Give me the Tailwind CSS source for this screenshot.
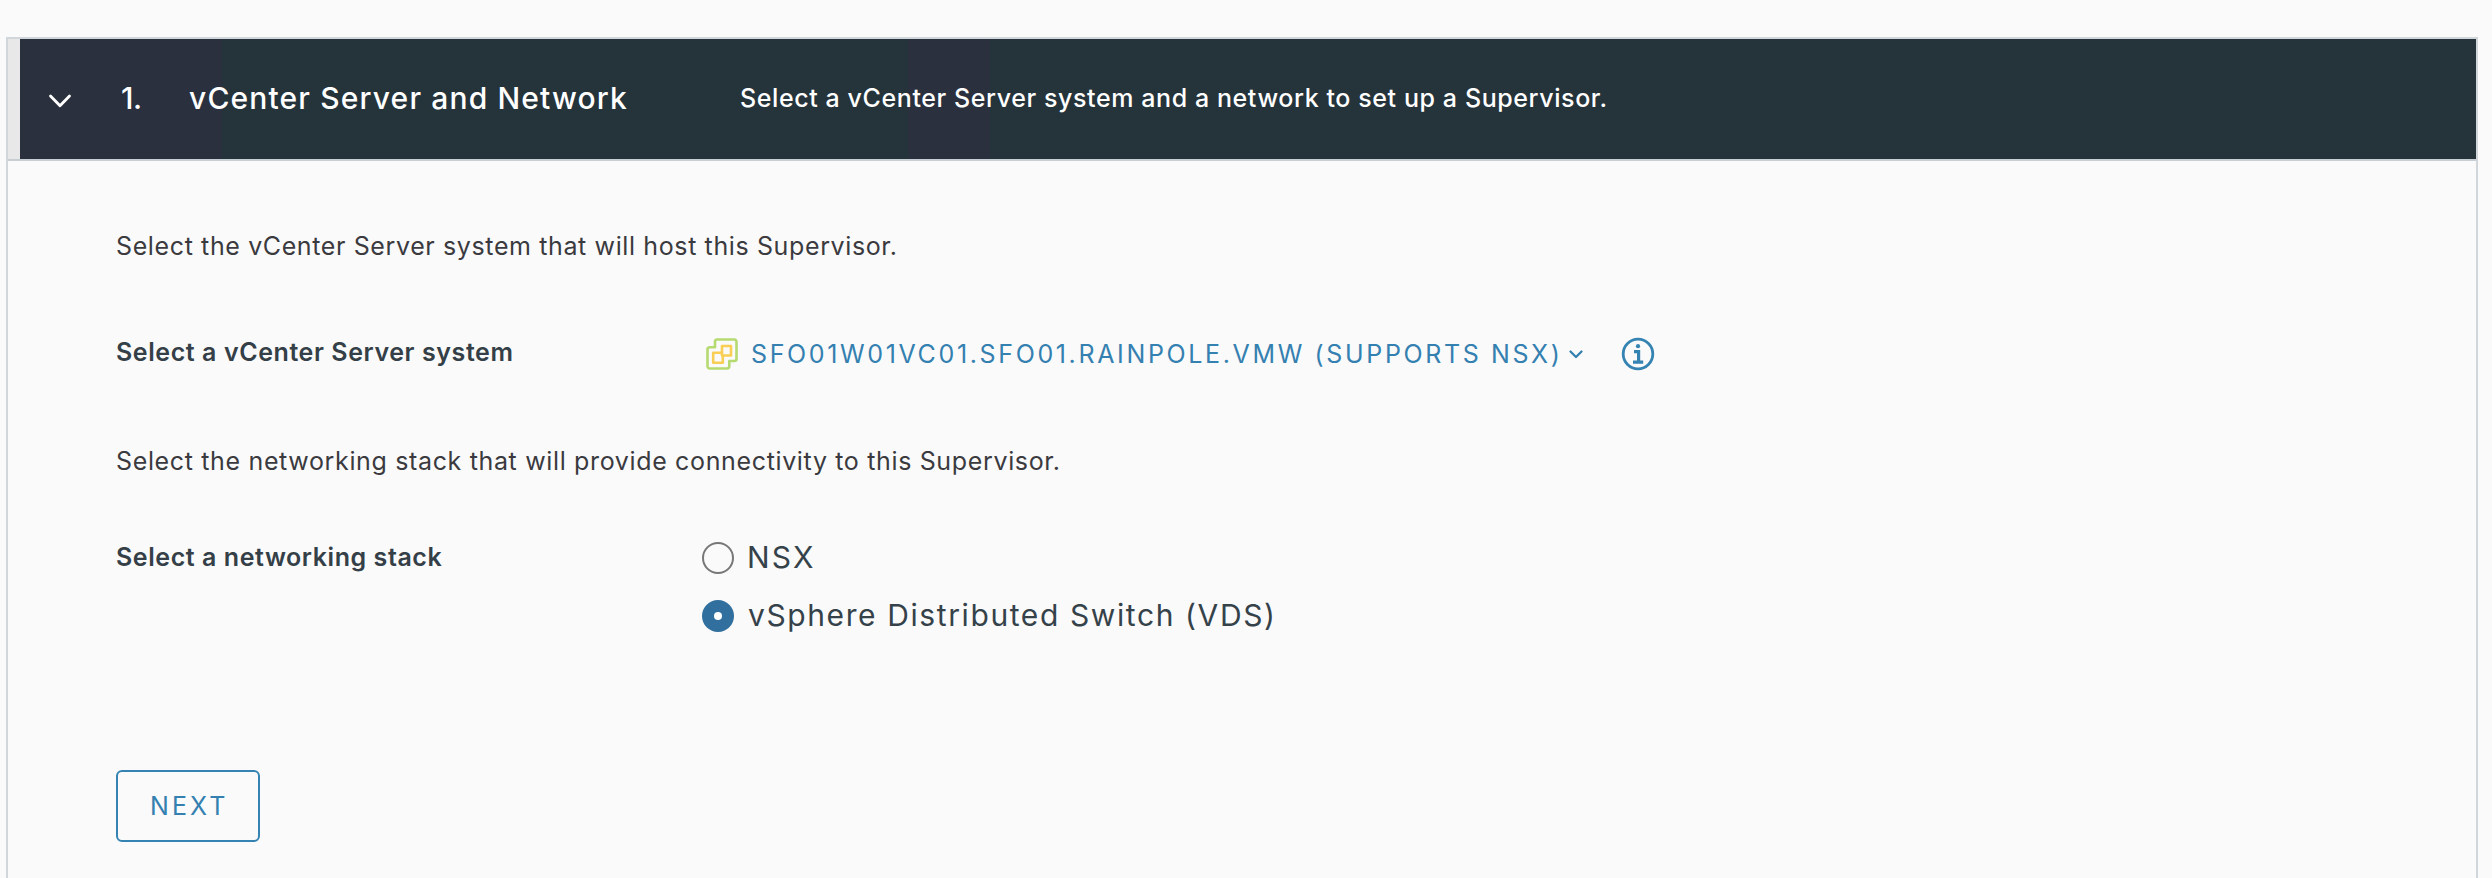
<!DOCTYPE html>
<html lang="en">
<head>
<meta charset="utf-8">
<title>vCenter Server and Network</title>
<script src="https://cdn.jsdelivr.net/npm/@tailwindcss/browser@4"></script>
</head>
<body class="h-[878px] overflow-hidden bg-[#fafafa] pt-[37px] pl-[6px] font-['Inter','Liberation_Sans',sans-serif] text-[25px] leading-[32px] text-[#3a3a3f]">
<main class="h-[841px] w-[2472px] border-2 border-b-0 border-[#d0d6da]">
  <header class="flex h-[122px] border-b-2 border-[#c8cfd4] bg-[#e8e8e8] pl-[12px]">
    <div class="flex flex-1 items-center bg-[#25333b] bg-[linear-gradient(to_right,#2a303e_202px,#25333b_202px,#25333b_888px,#2a303e_888px,#2a303e_970px,#25333b_970px)] text-white">
      <svg class="ml-[27px] h-6 w-6.5 shrink-0" viewBox="0 0 26 24" fill="none" stroke="currentColor" stroke-width="2.8" stroke-linecap="round" stroke-linejoin="round"><path d="M3.5 9 L13 18.8 L22.5 9"/></svg>
      <span class="ml-[48px] w-[68px] shrink-0 -translate-y-px text-[30px] font-medium tracking-[-0.45px]">1.</span>
      <h2 class="w-[551px] shrink-0 -translate-y-px text-[30px] font-medium tracking-[1.151px] whitespace-nowrap">vCenter Server and Network</h2>
      <p class="-translate-y-px font-medium tracking-[0.59px] whitespace-nowrap">Select a vCenter Server system and a network to set up a Supervisor.</p>
    </div>
  </header>

  <section class="pt-[69px] pl-[108px]">
    <p class="tracking-[0.62px] whitespace-nowrap">Select the vCenter Server system that will host this Supervisor.</p>

    <div class="mt-[76px] flex h-8 items-center">
      <span class="w-[590px] shrink-0 -translate-y-0.5 font-semibold tracking-[0.58px] text-[#343f47]">Select a vCenter Server system</span>
      <button class="flex items-center text-[#3480b0]">
        <svg class="h-8 w-8 shrink-0" viewBox="0 0 32 32" fill="none" stroke-linejoin="round">
          <path stroke="#b5da70" stroke-width="2.6" d="M11 1.5H28Q30.5 1.5 30.5 4V21Q30.5 23 28.5 23H23.3V28Q23.3 30.5 21 30.5H4Q1.5 30.5 1.5 28V11.5Q1.5 9.3 4 9.3H9V4Q9 1.5 11 1.5Z"/>
          <path stroke="#f8cf54" stroke-width="2.6" d="M16 8H25V17.5H16ZM16 14.8H7.2V24.7H16.8V17.5M7.2 16V24.7"/>
        </svg>
        <span class="ml-[13px] text-[25px] tracking-[2.64px] whitespace-nowrap">SFO01W01VC01.SFO01.RAINPOLE.VMW (SUPPORTS NSX)</span>
        <svg class="ml-[6px] h-3 w-4 shrink-0" viewBox="0 0 16 12" fill="none" stroke="currentColor" stroke-width="2.3" stroke-linecap="round" stroke-linejoin="round"><path d="M2.5 3.5 L8 9 L13.5 3.5"/></svg>
      </button>
      <svg class="ml-[37px] h-8.5 w-8.5 shrink-0 text-[#3583b2]" viewBox="0 0 34 34" fill="none" stroke="currentColor" stroke-width="2.8">
        <circle cx="17" cy="17" r="14.8"/>
        <circle cx="17" cy="9.2" r="2.1" fill="currentColor" stroke="none"/>
        <path d="M13 14.6H17.6V25M12 25.2H22.2" stroke-width="3.2"/>
      </svg>
    </div>

    <p class="mt-[76px] -translate-y-px tracking-[0.65px] whitespace-nowrap">Select the networking stack that will provide connectivity to this Supervisor.</p>

    <div class="mt-[64px] flex">
      <span class="w-[586px] shrink-0 -translate-y-px font-semibold tracking-[0.57px] text-[#343f47]">Select a networking stack</span>
      <div class="flex flex-col gap-[26px] text-[30px] text-[#35424a]">
        <label class="flex h-8 items-center"><span class="h-8 w-8 shrink-0 rounded-full border-2 border-[#777]"></span><span class="ml-[13px] -translate-y-px tracking-[2.2px]">NSX</span></label>
        <label class="flex h-8 items-center"><span class="flex h-8 w-8 shrink-0 items-center justify-center rounded-full bg-[#316f9e]"><span class="h-2 w-2 rounded-full bg-white"></span></span><span class="ml-[14px] -translate-y-px tracking-[1.6px] whitespace-nowrap">vSphere Distributed Switch (VDS)</span></label>
      </div>
    </div>

    <button class="mt-[138px] flex h-[72px] w-[144px] items-center rounded-[6px] border-2 border-[#3583b2] pl-[32px] tracking-[3.1px] text-[#3480b0]"><span>NEXT</span></button>
  </section>
</main>
</body>
</html>
